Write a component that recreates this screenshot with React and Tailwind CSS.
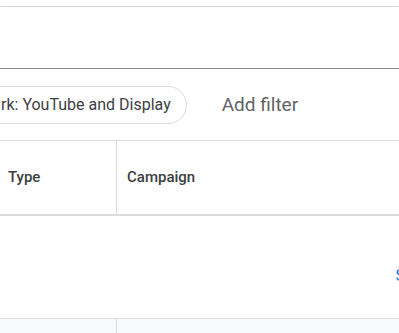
import React from 'react';

const App = () => {
  return (
    <div className="w-[399px] h-[333px] overflow-hidden bg-white font-['Roboto',sans-serif]">
      <div className="h-[7px] bg-white border-b border-[#dadce0]" />
      <div className="h-[62px] bg-white shadow-[0_1px_2px_rgba(60,64,67,0.6)] border-b border-[#8a8a8a]" />

      <div className="h-[71px] bg-white flex items-center gap-[35px] pt-[1px]">
        <div className="-ml-[22px] h-[38px] pl-[22px] pr-[15px] flex items-center rounded-full border border-[#dadce0] text-[16px] text-[#3c4043] whitespace-nowrap">
          rk: YouTube and Display
        </div>
        <span className="text-[19px] text-[#5f6368] whitespace-nowrap">Add filter</span>
      </div>

      <div className="flex h-[76px] border-t border-[#dadce0] border-b-2 border-b-[#dadce0] text-[15px] font-medium text-[#3c4043]">
        <div className="w-[117px] border-r border-[#dadce0] flex items-center pl-[8px]">Type</div>
        <div className="flex-1 flex items-center pl-[10px]">Campaign</div>
      </div>

      <div className="h-[102px] bg-white flex items-center justify-end">
        <span className="text-[16px] text-[#1a73e8] translate-x-[6px] mt-[18px]">S</span>
      </div>

      <div className="flex h-[16px] border-t border-[#dadce0] bg-[#f8f9fa]">
        <div className="w-[117px] border-r border-[#dadce0]" />
        <div className="flex-1" />
      </div>
    </div>
  );
};

export default App;
